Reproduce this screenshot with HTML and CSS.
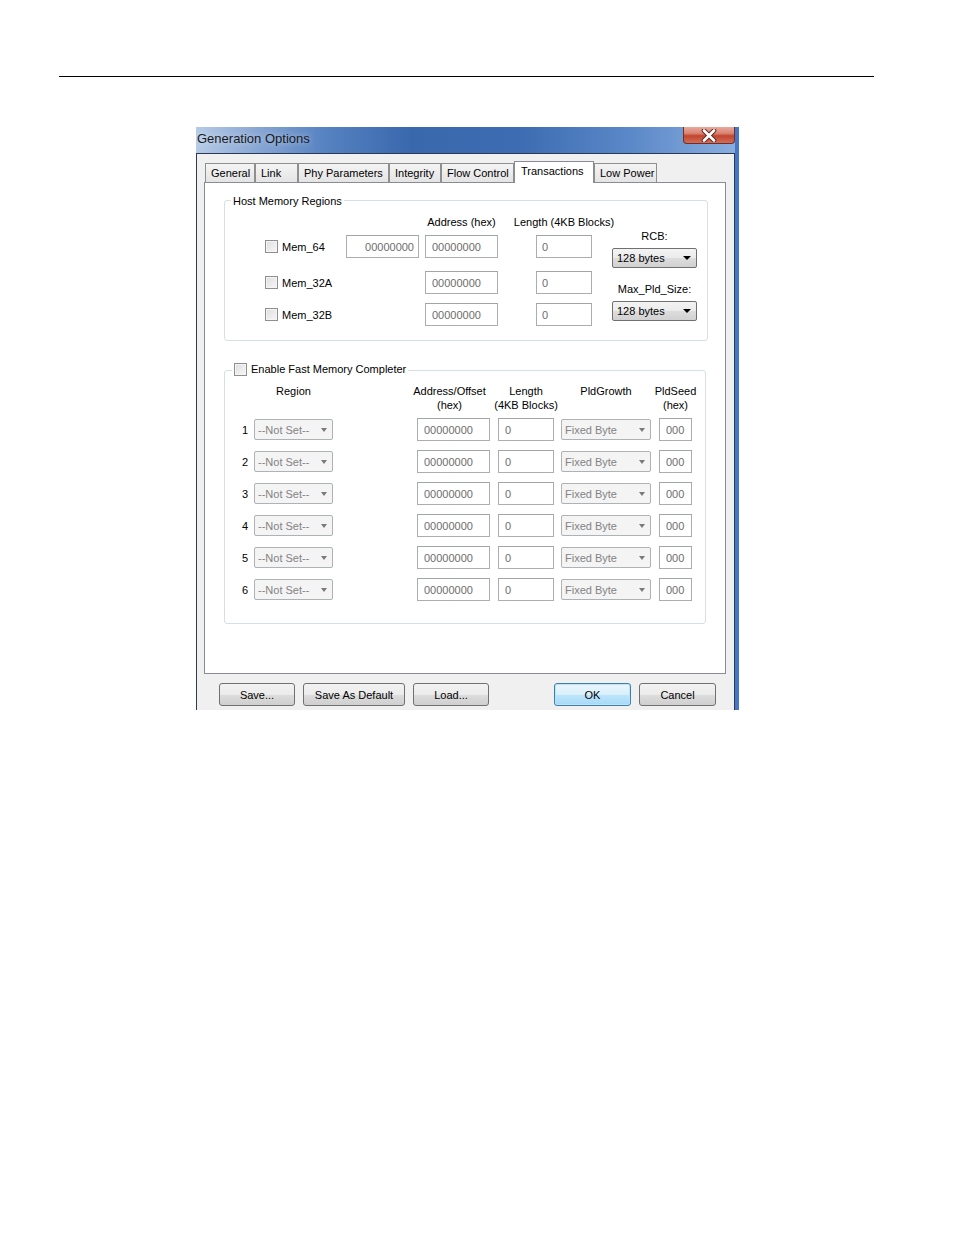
FILE: index.html
```html
<!DOCTYPE html>
<html lang="en">
<head>
    <meta charset="UTF-8">
    <meta name="viewport" content="width=device-width, initial-scale=1.0">
    <title>Generation Options</title>
    <link rel="stylesheet" href="styles.css">
</head>
<body>

    <div class="page-rule"></div>

    <div class="window">
        <div class="titlebar">
            <span class="title">Generation Options</span>
            <div class="close-btn">
                <svg width="16" height="13" viewBox="0 0 16 13">
                    <path d="M3 1.5 L13 11.5 M13 1.5 L3 11.5" stroke="#5a2a24" stroke-width="4.6" stroke-linecap="round"/>
                    <path d="M3 1.5 L13 11.5 M13 1.5 L3 11.5" stroke="#ffffff" stroke-width="2.6" stroke-linecap="round"/>
                </svg>
            </div>
        </div>

        <div class="client">
            <div class="tab-row">
                <div class="tab" style="width: 50px">General</div>
                <div class="tab" style="width: 43px">Link</div>
                <div class="tab" style="width: 91px">Phy Parameters</div>
                <div class="tab" style="width: 52px">Integrity</div>
                <div class="tab" style="width: 73px">Flow Control</div>
                <div class="tab active" style="width: 80px">Transactions</div>
                <div class="tab" style="width: 63px">Low Power</div>
            </div>

            <div class="tab-panel">

                <!-- Host memory regions -->
                <div class="group host-group">
                    <div class="group-title">Host Memory Regions</div>
                    <div class="host-body">
                        <div class="host-left">
                            <div class="host-head">
                                <span class="hm-spacer"></span>
                                <span class="hm-addr center">Address (hex)</span>
                                <span class="hm-len center">Length (4KB Blocks)</span>
                            </div>
                            <div class="host-row first">
                                <span class="hm-check"><span class="cb"></span>Mem_64</span>
                                <input class="field hm-upper right" type="text" value="00000000" readonly>
                                <input class="field hm-addr" type="text" value="00000000" readonly>
                                <input class="field hm-len" type="text" value="0" readonly>
                            </div>
                            <div class="host-row second">
                                <span class="hm-check"><span class="cb"></span>Mem_32A</span>
                                <span class="hm-upper"></span>
                                <input class="field hm-addr" type="text" value="00000000" readonly>
                                <input class="field hm-len" type="text" value="0" readonly>
                            </div>
                            <div class="host-row third">
                                <span class="hm-check"><span class="cb"></span>Mem_32B</span>
                                <span class="hm-upper"></span>
                                <input class="field hm-addr" type="text" value="00000000" readonly>
                                <input class="field hm-len" type="text" value="0" readonly>
                            </div>
                        </div>
                        <div class="host-right">
                            <div class="rcb-label">RCB:</div>
                            <div class="combo"><span>128 bytes</span><span class="arrow"></span></div>
                            <div class="pld-label">Max_Pld_Size:</div>
                            <div class="combo"><span>128 bytes</span><span class="arrow"></span></div>
                        </div>
                    </div>
                </div>

                <!-- Fast memory completer -->
                <div class="group fast-group">
                    <div class="group-title check-title"><span class="cb"></span>Enable Fast Memory Completer</div>
                    <div class="fm-head">
                        <span class="fm-num"></span>
                        <span class="fm-region center">Region</span>
                        <span class="fm-addr center shift">Address/Offset<br>(hex)</span>
                        <span class="fm-len center">Length<br>(4KB Blocks)</span>
                        <span class="fm-growth center">PldGrowth</span>
                        <span class="fm-seed center">PldSeed<br>(hex)</span>
                    </div>

                    <div class="fm-row">
                        <span class="fm-num">1</span>
                        <div class="combo off fm-region"><span>--Not Set--</span><span class="arrow"></span></div>
                        <input class="field fm-addr" type="text" value="00000000" readonly>
                        <input class="field fm-len" type="text" value="0" readonly>
                        <div class="combo off fm-growth"><span>Fixed Byte</span><span class="arrow"></span></div>
                        <input class="field fm-seed" type="text" value="000" readonly>
                    </div>
                    <div class="fm-row">
                        <span class="fm-num">2</span>
                        <div class="combo off fm-region"><span>--Not Set--</span><span class="arrow"></span></div>
                        <input class="field fm-addr" type="text" value="00000000" readonly>
                        <input class="field fm-len" type="text" value="0" readonly>
                        <div class="combo off fm-growth"><span>Fixed Byte</span><span class="arrow"></span></div>
                        <input class="field fm-seed" type="text" value="000" readonly>
                    </div>
                    <div class="fm-row">
                        <span class="fm-num">3</span>
                        <div class="combo off fm-region"><span>--Not Set--</span><span class="arrow"></span></div>
                        <input class="field fm-addr" type="text" value="00000000" readonly>
                        <input class="field fm-len" type="text" value="0" readonly>
                        <div class="combo off fm-growth"><span>Fixed Byte</span><span class="arrow"></span></div>
                        <input class="field fm-seed" type="text" value="000" readonly>
                    </div>
                    <div class="fm-row">
                        <span class="fm-num">4</span>
                        <div class="combo off fm-region"><span>--Not Set--</span><span class="arrow"></span></div>
                        <input class="field fm-addr" type="text" value="00000000" readonly>
                        <input class="field fm-len" type="text" value="0" readonly>
                        <div class="combo off fm-growth"><span>Fixed Byte</span><span class="arrow"></span></div>
                        <input class="field fm-seed" type="text" value="000" readonly>
                    </div>
                    <div class="fm-row">
                        <span class="fm-num">5</span>
                        <div class="combo off fm-region"><span>--Not Set--</span><span class="arrow"></span></div>
                        <input class="field fm-addr" type="text" value="00000000" readonly>
                        <input class="field fm-len" type="text" value="0" readonly>
                        <div class="combo off fm-growth"><span>Fixed Byte</span><span class="arrow"></span></div>
                        <input class="field fm-seed" type="text" value="000" readonly>
                    </div>
                    <div class="fm-row">
                        <span class="fm-num">6</span>
                        <div class="combo off fm-region"><span>--Not Set--</span><span class="arrow"></span></div>
                        <input class="field fm-addr" type="text" value="00000000" readonly>
                        <input class="field fm-len" type="text" value="0" readonly>
                        <div class="combo off fm-growth"><span>Fixed Byte</span><span class="arrow"></span></div>
                        <input class="field fm-seed" type="text" value="000" readonly>
                    </div>
                </div>
            </div>

            <div class="button-row">
                <button class="btn" style="width: 76px">Save...</button>
                <button class="btn" style="width: 102px">Save As Default</button>
                <button class="btn" style="width: 76px">Load...</button>
                <button class="btn default push" style="width: 77px">OK</button>
                <button class="btn" style="width: 77px">Cancel</button>
            </div>
        </div>
    </div>

</body>
</html>
```

FILE: styles.css
```css
body {
    margin: 0;
    background: #fff;
    font-family: "Liberation Sans", Arial, sans-serif;
    font-size: 11px;
    color: #000;
}
.page-rule {
    margin: 76px 0 0 59px;
    width: 815px;
    border-top: 1px solid #000;
}

/* window frame */
.window {
    margin: 50px 0 0 196px;
    width: 539px;
    height: 583px;
    border-right: 4px solid #4676c4;
    overflow: hidden;
    display: flex;
    flex-direction: column;
}
.titlebar {
    height: 26px;
    flex-shrink: 0;
    display: flex;
    justify-content: space-between;
    align-items: flex-start;
    background: linear-gradient(90deg, #b6cbe7 0%, #8eaad6 10%, #5682c1 24%, #3a68ad 40%, #3d6cb2 60%, #5987c7 80%, #8aaddf 100%);
}
.title {
    padding-left: 1px;
    line-height: 23px;
    font-size: 13px;
    color: #151a22;
    text-shadow: 0 0 6px rgba(255,255,255,0.6);
}
.close-btn {
    width: 50px;
    height: 16px;
    border: 1px solid #6d3028;
    border-top: none;
    border-radius: 0 0 4px 4px;
    background: linear-gradient(#eaa99c 0%, #d98370 40%, #c2452f 55%, #d06e58 100%);
    display: flex;
    justify-content: center;
    align-items: center;
}
.client {
    flex: 1;
    background: #f0f0f0;
    border: solid #2b3a52;
    border-width: 1px 1px 0 1px;
    padding-top: 7px;
}

/* tabs */
.tab-row {
    display: flex;
    align-items: flex-end;
    height: 21px;
    padding-left: 8px;
}
.tab {
    box-sizing: border-box;
    height: 19px;
    padding-left: 5px;
    line-height: 18px;
    border: 1px solid #8e8f8f;
    border-bottom: none;
    background: linear-gradient(#f4f4f4, #e4e4e4);
    white-space: nowrap;
}
.tab.active {
    height: 22px;
    margin-bottom: -1px;
    line-height: 19px;
    padding-left: 6px;
    background: #fff;
    border-color: #898c95;
    position: relative;
    z-index: 1;
}
.tab-panel {
    margin-left: 7px;
    width: 520px;
    height: 490px;
    background: #fff;
    border: 1px solid #898c95;
    overflow: hidden;
}

/* group boxes */
.group {
    border: 1px solid #d5dfe5;
    border-radius: 3px;
    margin-left: 19px;
}
.group-title {
    display: table;
    margin: -7px 0 0 6px;
    padding: 0 2px;
    line-height: 14px;
    background: #fff;
}
.check-title {
    display: flex;
    width: fit-content;
    align-items: center;
    gap: 4px;
    margin: -9px 0 0 7px;
}
.host-group {
    margin-top: 17px;
    width: 482px;
    height: 139px;
}
.fast-group {
    margin-top: 29px;
    width: 480px;
    height: 252px;
}
.cb {
    display: inline-block;
    box-sizing: border-box;
    width: 13px;
    height: 13px;
    border: 1px solid #8f8f8f;
    background: linear-gradient(135deg, #dedede, #f7f7f7);
    box-shadow: inset 0 0 0 1px #f4f4f4;
    flex-shrink: 0;
}
.center {
    display: flex;
    justify-content: center;
    text-align: center;
    white-space: nowrap;
}
.field {
    box-sizing: border-box;
    height: 23px;
    margin: 0;
    padding: 0 0 0 5px;
    border: 1px solid #abadb3;
    border-top-color: #a0a4ab;
    background: #fff;
    font-family: "Liberation Sans", Arial, sans-serif;
    font-size: 11px;
    color: #6d6d6d;
    outline: none;
}
.field.right {
    text-align: right;
    padding: 0 4px 0 0;
}

/* host memory regions */
.host-body {
    display: flex;
}
.host-left {
    padding-left: 40px;
}
.host-head {
    display: flex;
    margin-top: 7px;
    line-height: 14px;
}
.hm-spacer {
    width: 160px;
}
.host-row {
    display: flex;
    align-items: center;
    height: 23px;
}
.host-row.first {
    margin-top: 6px;
}
.host-row.second {
    margin-top: 13px;
}
.host-row.third {
    margin-top: 9px;
}
.hm-check {
    width: 81px;
    display: flex;
    align-items: center;
    gap: 4px;
}
.hm-upper {
    width: 73px;
    margin-right: 6px;
}
.hm-addr {
    width: 73px;
    margin-right: 38px;
}
.field.hm-addr {
    padding-left: 6px;
}
.hm-len {
    width: 56px;
}
.host-right {
    margin-left: 20px;
    width: 85px;
    display: flex;
    flex-direction: column;
    align-items: center;
}
.rcb-label {
    margin-top: 21px;
    line-height: 14px;
}
.pld-label {
    margin-top: 14px;
    line-height: 14px;
}
.host-right .combo {
    margin-top: 5px;
    width: 85px;
}

/* combo boxes */
.combo {
    box-sizing: border-box;
    height: 20px;
    padding: 0 5px 0 4px;
    display: flex;
    justify-content: space-between;
    align-items: center;
    border: 1px solid #707070;
    border-radius: 2px;
    background: linear-gradient(#f3f3f3 0%, #ebebeb 50%, #dddddd 50%, #d1d1d1 100%);
    white-space: nowrap;
}
.combo .arrow {
    width: 0;
    height: 0;
    border-left: 4px solid transparent;
    border-right: 4px solid transparent;
    border-top: 4px solid #000;
}
.combo.off {
    height: 21px;
    border-color: #adb2b5;
    background: #f4f4f4;
    color: #838383;
    padding: 0 5px 0 3px;
}
.combo.off .arrow {
    border-left-width: 3.5px;
    border-right-width: 3.5px;
    border-top-color: #7a7a7a;
}

/* fast memory table */
.fm-head {
    display: flex;
    margin-top: 8px;
    line-height: 14px;
}
.fm-row {
    display: flex;
    align-items: center;
    height: 23px;
    margin-top: 9px;
}
.fm-head + .fm-row {
    margin-top: 6px;
}
.fm-num {
    box-sizing: border-box;
    width: 29px;
    padding-right: 6px;
    text-align: right;
}
.fm-region {
    width: 79px;
    margin-right: 84px;
}
.fm-addr {
    width: 73px;
    margin-right: 8px;
}
.fm-head .shift {
    box-sizing: border-box;
    padding-right: 8px;
}
.fm-len {
    width: 56px;
    margin-right: 7px;
}
.fm-growth {
    width: 90px;
    margin-right: 8px;
}
.fm-seed {
    width: 33px;
}
.fm-row .field {
    padding-left: 6px;
}

/* bottom buttons */
.button-row {
    display: flex;
    gap: 8px;
    margin-top: 9px;
    padding-left: 22px;
}
.btn {
    box-sizing: border-box;
    height: 23px;
    padding: 0;
    border: 1px solid #707070;
    border-radius: 3px;
    background: linear-gradient(#f2f2f2 0%, #ebebeb 50%, #dddddd 50%, #cfcfcf 100%);
    font-family: "Liberation Sans", Arial, sans-serif;
    font-size: 11px;
    color: #000;
}
.btn.default {
    border-color: #3c7fb1;
    background: linear-gradient(#eaf6fd 0%, #d9f0fc 50%, #bee6fd 50%, #a7d9f5 100%);
    box-shadow: inset 0 0 0 1px #bfe4f8;
}
.btn.push {
    margin-left: 57px;
}
```
